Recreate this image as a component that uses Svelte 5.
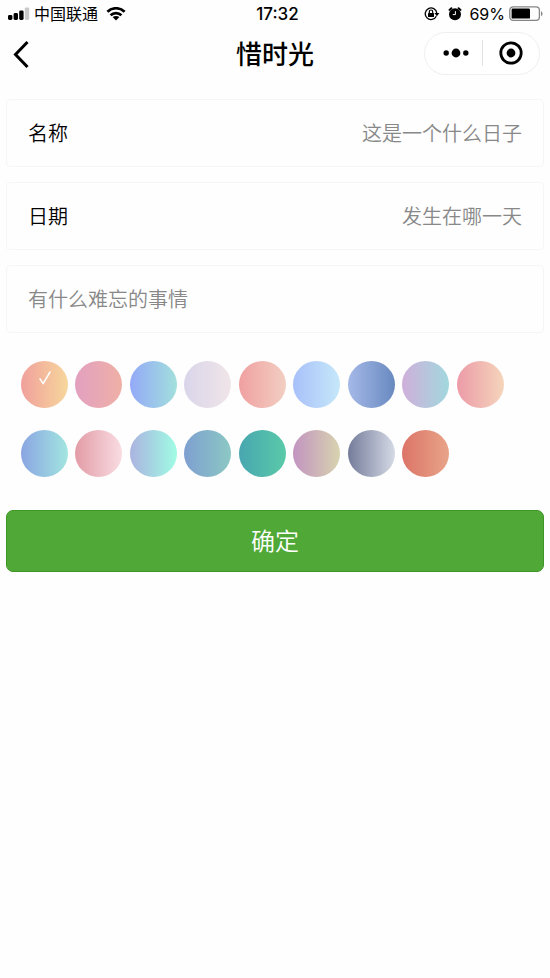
<script>
  const swatches = [
    ['#f0a09c', '#f7d79c'],
    ['#e2a0c0', '#efb0a6'],
    ['#94a9f8', '#a2e0dc'],
    ['#d9d5ea', '#f0e5e8'],
    ['#f0a0a0', '#f2cfc2'],
    ['#a8c0fa', '#c6e8f9'],
    ['#a5b9e8', '#6889bf'],
    ['#cfafda', '#a2d8de'],
    ['#ec9ba8', '#f5d5bb'],
    ['#8aa5e2', '#a2e6e0'],
    ['#e29ca6', '#f9dce2'],
    ['#abb3e0', '#a0fce4'],
    ['#7e9fd0', '#8cc8c4'],
    ['#48a6b0', '#5acaa8'],
    ['#c294c0', '#d8d3b0'],
    ['#747c9a', '#d6dae6'],
    ['#dc7468', '#e8a488']
  ];

  let name = $state('');
  let date = $state('');
  let story = $state('');
  let selected = $state(0);
</script>

<div class="page">
  <div class="status">
    <div class="side">
      <svg width="22" height="14" viewBox="0 0 22 14" aria-hidden="true">
        <rect x="0" y="8" width="4.4" height="5" rx="1.4" />
        <rect x="5.6" y="6" width="4.4" height="7" rx="1.4" />
        <rect x="11.2" y="3.4" width="4.4" height="9.6" rx="1.4" />
        <rect x="16.8" y="0.4" width="4.4" height="12.6" rx="1.4" fill="#c9c9c9" />
      </svg>
      <span class="carrier">中国联通</span>
      <svg width="20" height="14" viewBox="0 0 20 14" aria-hidden="true">
        <g fill="none" stroke="#000" stroke-width="2.7">
          <path d="M1.4 4.7C6.2.1 13.8.1 18.6 4.7" />
          <path d="M4.6 8.2C7.6 5.3 12.4 5.3 15.4 8.2" />
        </g>
        <path d="M6.6 10.1C8.6 8.5 11.4 8.5 13.4 10.1L10 13.4Z" />
      </svg>
    </div>
    <time>17:32</time>
    <div class="side end">
      <svg width="16" height="14" viewBox="0 0 16 14" aria-hidden="true">
        <path d="M12.3 9.2A5.8 5.8 0 1 1 12.8 6" fill="none" stroke="#000" stroke-width="1.3" />
        <path d="M10.4 6H15.4L12.9 9.2Z" />
        <rect x="4" y="5.9" width="6" height="4.2" rx=".6" />
        <path d="M5.3 6.3V4.7a1.7 1.7 0 0 1 3.4 0v1.6" fill="none" stroke="#000" stroke-width="1.2" />
      </svg>
      <svg class="alarm" width="14" height="14" viewBox="0 0 14 14" aria-hidden="true">
        <circle cx="7" cy="7.2" r="6" />
        <path d="M1.5 2.9 3.4 1.2M12.5 2.9 10.6 1.2" stroke="#000" stroke-width="1.9" stroke-linecap="round" />
        <path d="M7.4 4.2V7.6H4.8" fill="none" stroke="#fff" stroke-width="1" />
      </svg>
      <span>69%</span>
      <svg class="battery" width="34" height="16" viewBox="0 0 34 16" aria-hidden="true">
        <rect x=".8" y=".8" width="29.6" height="13.6" rx="3.4" fill="none" stroke="#858585" stroke-width="1.3" />
        <rect x="2.6" y="2.6" width="18.4" height="10" rx="1.2" />
        <path d="M32 5.2c2 .8 2 4 0 4.8Z" fill="#858585" />
      </svg>
    </div>
  </div>

  <header>
    <button class="back" type="button" aria-label="返回">
      <svg width="18" height="30" viewBox="0 0 18 30" aria-hidden="true">
        <path d="M15.5 4 3.5 16.5 15.5 29" fill="none" stroke="#000" stroke-width="3" />
      </svg>
    </button>
    <h1>惜时光</h1>
    <div class="capsule">
      <button type="button" aria-label="更多">
        <svg width="26" height="10" viewBox="0 0 26 10" aria-hidden="true">
          <circle cx="3.2" cy="5" r="2.7" />
          <circle cx="13" cy="5" r="4.4" />
          <circle cx="22.8" cy="5" r="2.7" />
        </svg>
      </button>
      <button type="button" aria-label="关闭">
        <svg width="24" height="24" viewBox="0 0 24 24" aria-hidden="true">
          <circle cx="12" cy="12" r="10.2" fill="none" stroke="#000" stroke-width="2.8" />
          <circle cx="12" cy="12" r="4.4" />
        </svg>
      </button>
    </div>
  </header>

  <form onsubmit={(e) => e.preventDefault()}>
    <div class="field">
      <label for="name">名称</label>
      <input id="name" type="text" placeholder="这是一个什么日子" bind:value={name} />
    </div>
    <div class="field">
      <label for="date">日期</label>
      <input id="date" type="text" placeholder="发生在哪一天" bind:value={date} />
    </div>
    <div class="field">
      <textarea rows="1" aria-label="难忘的事情" placeholder="有什么难忘的事情" bind:value={story}></textarea>
    </div>

    <div class="swatches" role="radiogroup" aria-label="颜色">
      {#each swatches as [from, to], i}
        <label class="swatch" style:--from={from} style:--to={to}>
          <input type="radio" name="color" value={i} bind:group={selected} aria-label={`颜色 ${i + 1}`} />
          {#if selected === i}
            <svg width="12" height="14" viewBox="0 0 12 14" aria-hidden="true">
              <path d="M1 7.8 4.2 12.6 11 1" fill="none" stroke="#fff" stroke-width="1.5" stroke-linecap="round" stroke-linejoin="round" />
            </svg>
          {/if}
        </label>
      {/each}
    </div>

    <button class="submit" type="submit">确定</button>
  </form>
</div>

<style>
  :global(body) {
    margin: 0;
    background: #fefefe;
  }

  .page {
    font-family: 'Noto Sans CJK SC', 'Liberation Sans', sans-serif;
    color: #000;
  }

  button,
  input,
  textarea {
    margin: 0;
    padding: 0;
    border: 0;
    background: none;
    font: inherit;
    color: inherit;
  }

  svg {
    display: block;
    flex: none;
  }

  .status {
    display: grid;
    grid-template-columns: 1fr auto 1fr;
    align-items: center;
    height: 28px;
    padding: 0 7px 0 8px;
    font-family: Inter, 'Noto Sans CJK SC', sans-serif;
    font-size: 16px;
    line-height: 24px;
  }

  .side {
    display: flex;
    align-items: center;
  }

  .end {
    justify-content: flex-end;
  }

  .carrier {
    margin: 0 8px 0 4px;
  }

  time {
    padding-left: 4px;
    font-weight: 500;
    font-size: 17px;
  }

  .alarm {
    margin: 0 7px 0 8px;
  }

  .battery {
    margin-left: 4px;
  }

  header {
    display: grid;
    grid-template-columns: 1fr auto 1fr;
    align-items: center;
    height: 50px;
    padding: 0 10px;
  }

  .back {
    justify-self: start;
    padding-left: 2px;
  }

  h1 {
    margin: 0;
    font-size: 26px;
    line-height: 36px;
    font-weight: 500;
  }

  .capsule {
    display: flex;
    justify-self: end;
    box-sizing: border-box;
    width: 116px;
    height: 43px;
    border: 1px solid #efefef;
    border-radius: 22px;
    background: #fff;
    align-items: center;
  }

  .capsule button {
    display: flex;
    box-sizing: border-box;
    width: 50%;
    align-items: center;
    justify-content: center;
    height: 26px;
  }

  .capsule button:first-child {
    padding-left: 4px;
  }

  .capsule button + button {
    border-left: 1px solid #e2e2e2;
  }

  form {
    padding: 21px 6px 0;
  }

  .field {
    display: flex;
    align-items: center;
    box-sizing: border-box;
    height: 68px;
    margin-bottom: 15px;
    padding: 0 21px;
    border: 1px solid #f6f6f6;
    border-radius: 4px;
    font-size: 20px;
    line-height: 30px;
    font-weight: 350;
  }

  .field label {
    flex: none;
  }

  .field input {
    flex: 1;
    min-width: 0;
    height: 30px;
    text-align: right;
  }

  textarea {
    flex: 1;
    height: 30px;
    resize: none;
    overflow: hidden;
  }

  input::placeholder,
  textarea::placeholder {
    color: #888;
    opacity: 1;
  }

  .swatches {
    display: grid;
    grid-template-columns: repeat(9, 1fr);
    row-gap: 22px;
    padding: 13px 33px 33px 15px;
  }

  .swatch {
    position: relative;
    display: flex;
    justify-content: center;
    box-sizing: border-box;
    width: 47px;
    height: 47px;
    padding-top: 10px;
    border-radius: 50%;
    background: linear-gradient(to right, var(--from), var(--to));
    cursor: pointer;
  }

  .swatch input {
    position: absolute;
    inset: 0;
    appearance: none;
    border-radius: 50%;
    cursor: pointer;
  }

  .submit {
    display: block;
    width: 100%;
    height: 62px;
    padding-bottom: 2px;
    border: 1px solid #3f9526;
    border-radius: 7px;
    background: #50a936;
    color: #fff;
    font-size: 24px;
    font-weight: 350;
    line-height: 36px;
    cursor: pointer;
  }
</style>
